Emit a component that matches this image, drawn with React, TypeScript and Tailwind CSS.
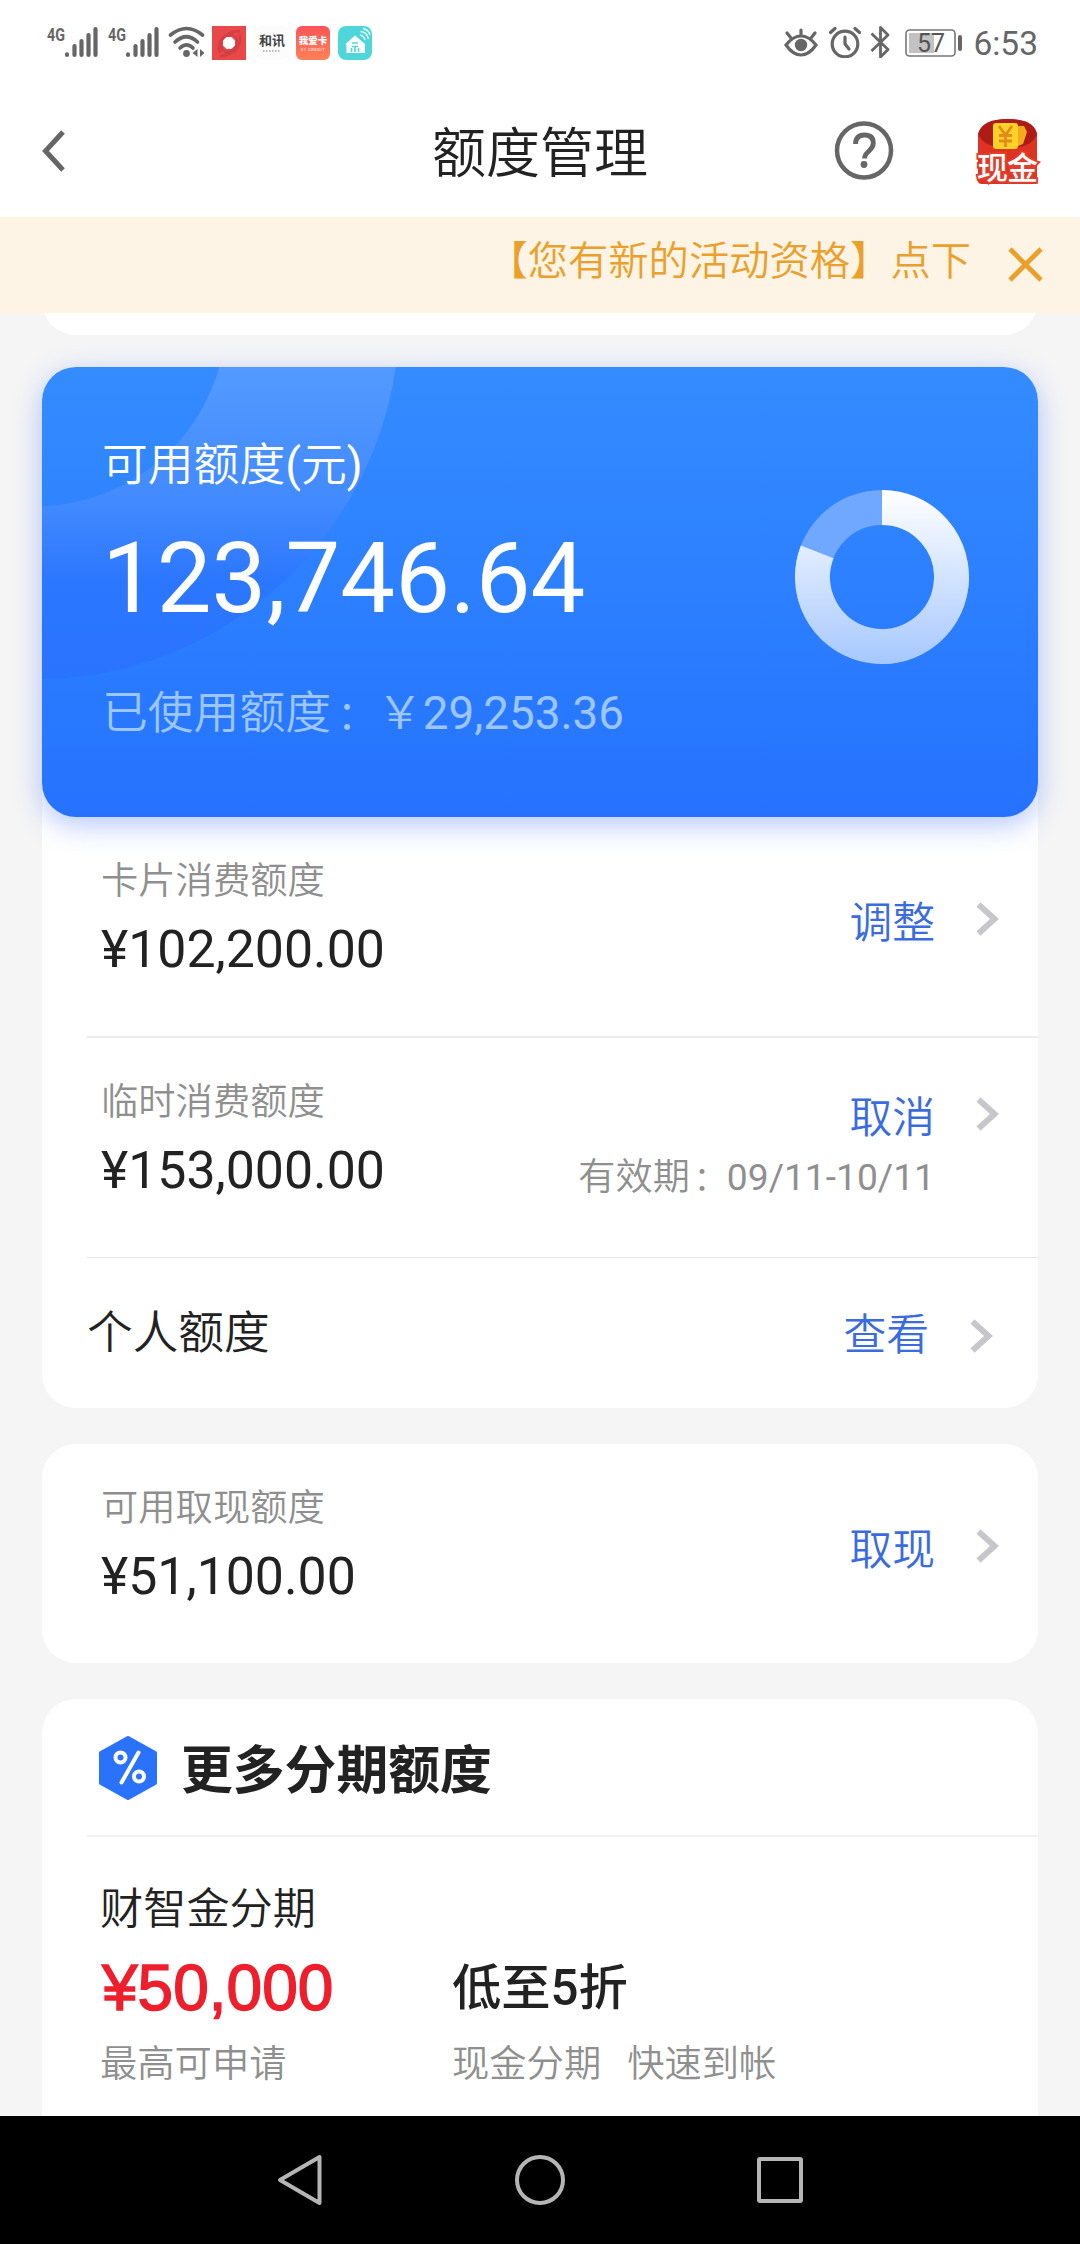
import React from 'react';

const used = 29253.36;
const total = 153000;

function Signal() {
  return (
    <svg className="w-[61px] h-10 shrink-0" viewBox="0 0 61 40">
      <text x="0" y="23" fontSize="19" fontWeight="700" textLength="18" lengthAdjust="spacingAndGlyphs" fill="#666">4G</text>
      <g stroke="#666" strokeWidth="4.2" strokeLinecap="round">
        <path d="M20 37v-.6M27.500 37v-9M34.500 37v-14M41.500 37v-20M48.500 37v-26" />
      </g>
    </svg>
  );
}

function Wifi() {
  return (
    <svg className="w-[38px] h-10 shrink-0" viewBox="0 0 38 40">
      <g fill="none" stroke="#666" strokeWidth="3.6" strokeLinecap="round">
        <path d="M2.500 17Q18.500 4 34.500 17" />
        <path d="M7 24Q18.500 13.500 29.500 24" />
        <path d="M12 30Q18.500 23.500 25 30" />
      </g>
      <circle cx="18.500" cy="35.500" r="3.400" fill="#666" />
      <path d="M29.500 31v8l-5-4zM32 31v8l4.500-4z" fill="#666" />
    </svg>
  );
}

function StatusBar() {
  return (
    <div className="flex h-[88px] items-start pt-[18px] pl-[47px] pr-[42px]">
      <Signal />
      <Signal />
      <div className="-ml-[1px]"><Wifi /></div>
      <svg className="mt-2 ml-[6px] size-[34px] shrink-0" viewBox="0 0 34 34">
        <rect width="34" height="34" fill="#e9484b" />
        <g fill="none" stroke="#cf3b42" strokeWidth="2.500" opacity=".7">
          <path d="M8 27C4 16 11 6 28 5M27 8c4 10-3 21-19 22M11 25C5 15 14 8 22 9M23 10c6 8-2 17-11 16" />
        </g>
        <path d="M14.500 11h5l3.500 3.500v5L19.500 23h-5L11 19.500v-5z" fill="#fff" />
      </svg>
      <div className="mt-2 ml-[9px] flex h-[34px] w-[34px] shrink-0 flex-col items-center rounded-md bg-[#fcfcfc] pt-[8px]">
        <span className="text-[13px] leading-[14px] font-bold whitespace-nowrap text-[#444]">和讯</span>
        <svg className="mt-[2px] h-[2px] w-[18px]" viewBox="0 0 18 2">
          <path d="M0 1h18" stroke="#777" strokeWidth="1.200" strokeDasharray="1.500 1.500" />
        </svg>
      </div>
      <div className="mt-2 ml-[7px] flex h-[34px] w-[34px] shrink-0 flex-col items-center rounded-[6px] bg-linear-to-b from-[#fb5357] to-[#fd8158] pt-[9px] text-white">
        <span className="text-[9.500px] leading-[12px] font-black whitespace-nowrap">我爱卡</span>
        <span className="text-[4px] leading-[5px] tracking-[0.6px] whitespace-nowrap">51 CREDIT</span>
      </div>
      <svg className="mt-2 ml-[8px] size-[34px] shrink-0" viewBox="0 0 34 34">
        <rect width="34" height="34" rx="8" fill="#4fd6da" />
        <path d="M17 9.500 27 18v9H8.500v-8L7.500 18z" fill="#fff" />
        <path d="M14 17h6M14 20.500h6M13.500 26v-4M20.500 26v-4M17 21v5" stroke="#4fd6da" strokeWidth="1.600" />
        <path d="M22 9q4 1 5 5M22.500 5.500Q29 6 30.500 13M25 2.500Q31 4 32 9" fill="none" stroke="#e6ffff" strokeWidth="1.400" />
      </svg>

      <div className="ml-auto flex items-start">
        <svg className="h-10 w-[34px]" viewBox="0 0 34 40">
          <g fill="none" stroke="#666" strokeWidth="3.200" strokeLinecap="round">
            <path d="M2 27Q9 18 17 18T32 27Q25 37 17 37T2 27z" />
            <path d="M17 17v-5M7 20l-4-5M27 20l4-5" />
          </g>
          <circle cx="17" cy="27" r="6.200" fill="#666" />
        </svg>
        <svg className="ml-[11px] h-10 w-8" viewBox="0 0 32 40">
          <g fill="none" stroke="#666" strokeWidth="3.200" strokeLinecap="round">
            <circle cx="16" cy="26" r="12.800" />
            <path d="M16 19v7l4 5M1.500 14.500 6 10.500M30.500 14.500 26 10.500" />
          </g>
        </svg>
        <svg className="ml-[9px] h-10 w-5" viewBox="0 0 20 40">
          <path d="m1.500 15.500 16.500 16-7.500 7.500V9.500L18 17 1.500 33" fill="none" stroke="#666" strokeWidth="2.800" strokeLinejoin="round" />
        </svg>
        <svg className="ml-[15px] h-10 w-[58px]" viewBox="0 0 58 40">
          <rect x="1" y="12" width="49" height="26" rx="3.500" fill="none" stroke="#777" strokeWidth="1.600" />
          <rect x="4" y="15" width="25" height="20" fill="#c2c2c2" />
          <path d="M55 19v12" stroke="#666" strokeWidth="4" strokeLinecap="round" />
          <text x="12" y="33.500" fontSize="26" textLength="28" lengthAdjust="spacingAndGlyphs" fill="#555">57</text>
        </svg>
        <span className="ml-[10px] pt-[6px] text-[33.500px] leading-[40px] text-[#666]">6:53</span>
      </div>
    </div>
  );
}

function TitleBar() {
  return (
    <header className="flex h-[129px] items-start pl-10 pr-[38px] pt-[33px]">
      <div className="w-[392px] pt-[6px]">
        <svg className="w-7 h-12" viewBox="0 0 28 48">
          <path d="M23 5 5.500 24 23 43" fill="none" stroke="#666" strokeWidth="5" />
        </svg>
      </div>
      <h1 className="h-[60px] pt-[4px] text-[54px] leading-[60px] whitespace-nowrap text-[#222] font-[350]">额度管理</h1>
      <svg className="ml-auto size-[60px]" viewBox="0 0 60 60">
        <circle cx="30" cy="29.500" r="27" fill="none" stroke="#666" strokeWidth="4.500" />
        <path d="M21.500 23q0-9 8.800-9 9 0 9 8 0 4-4.300 8-4.500 4-4.500 7.500" fill="none" stroke="#666" strokeWidth="4.800" />
        <circle cx="30" cy="43.500" r="3.400" fill="#666" />
      </svg>
      <svg className="-mt-[4px] ml-[80px] h-[70px] w-[68px]" viewBox="0 0 68 70">
        <path d="M4 17Q8 2 34 2T63 17v48q0 2-3 2H8q-4 0-4-3z" fill="#dd3323" />
        <path d="M4 17Q8 2 34 2T63 17Q58 31 34 31T4 17z" fill="#ae1c17" />
        <path d="M37 9h13l3 6-4 12-13 5z" fill="#f5a91f" />
        <rect x="19" y="6" width="25" height="26" rx="3" fill="#ffd129" />
        <path d="m25 9 6.500 9L38 9M25 18.500h13M25 24h13M31.500 18v12" fill="none" stroke="#e48a1c" strokeWidth="2.800" />
        <text x="3" y="62" fontSize="31" fontWeight="500" textLength="61" fill="#fff" stroke="#e23c2b" strokeWidth="4" paintOrder="stroke">现金</text>
      </svg>
    </header>
  );
}

function Banner() {
  return (
    <div className="flex h-24 items-center justify-end bg-[#fef4e5] pr-[35px] text-[#eaa02b]">
      <span className="-mt-[7px] text-[40.300px] leading-[60px] font-[350] whitespace-nowrap">【您有新的活动资格】点下</span>
      <svg className="ml-[36px] size-[38px]" viewBox="0 0 38 38">
        <path d="m3 3 31 31M34 3 3 34" stroke="#eaa02b" strokeWidth="4.800" />
      </svg>
    </div>
  );
}

function Donut() {
  const c = 2 * Math.PI * 69.5;
  return (
    <svg className="size-[174px]" viewBox="0 0 174 174">
      <defs>
        <linearGradient id="left" gradientUnits="userSpaceOnUse" x1="0" y1="0" x2="0" y2="174">
          <stop offset="0" stopColor="#fff" />
          <stop offset="1" stopColor="#a6c8ff" />
        </linearGradient>
      </defs>
      <circle cx="87" cy="87" r="69.5" fill="none" stroke="#70a8ff" strokeWidth="35" />
      <path d="M87 17.500A69.500 69.500 0 1 1 22.200 61.900" fill="none" stroke="url(#left)" strokeWidth="35" strokeDasharray={`${c * (1 - used / total)} ${c}`} />
    </svg>
  );
}

function BalanceCard() {
  return (
    <div className="relative flex h-[450px] justify-between overflow-hidden rounded-[34px] bg-linear-to-b from-[#348cff] to-[#2672ff] pt-[69px] pl-[60px] pr-[69px] text-white">
      <svg className="absolute top-0 left-0 h-[450px] w-[400px]" viewBox="0 0 400 450">
        <defs>
          <linearGradient id="band" gradientUnits="userSpaceOnUse" x1="0" y1="0" x2="0" y2="312">
            <stop offset="0" stopColor="#539aff" />
            <stop offset=".45" stopColor="#4189ff" />
            <stop offset=".68" stopColor="#2c77ff" />
            <stop offset="1" stopColor="#2973ff" />
          </linearGradient>
        </defs>
        <circle cx="-7" cy="-52" r="278" fill="none" stroke="url(#band)" strokeWidth="173" />
      </svg>
      <div className="relative">
        <p className="text-[45.800px] leading-[60px] font-[350]">
          可用额度<span className="font-normal">(</span>元<span className="font-normal">)</span>
        </p>
        <p className="mt-[33px] text-[97.500px] leading-[100px]">123,746.64</p>
        <p className="mt-[55px] text-[45.800px] leading-[60px] whitespace-nowrap text-[#9cc6ff] font-[350]">
          已使用额度<span className="pl-[6px] text-[40px]">：</span>￥<span className="font-normal">29,253.36</span>
        </p>
      </div>
      <div className="relative mt-[54px]">
        <Donut />
      </div>
    </div>
  );
}

function Chevron() {
  return (
    <svg className="h-9 w-6 shrink-0" viewBox="0 0 24 36">
      <path d="M3.500 3.500 19.500 18 3.500 32.500" fill="none" stroke="#c7c7cb" strokeWidth="6" />
    </svg>
  );
}

type RowProps = {
  label: string;
  amount: string;
  action: string;
  note?: React.ReactNode;
};

function LimitRow({ label, amount, action, note }: RowProps) {
  return (
    <div className="flex h-[219px] justify-between pl-[59px] pr-[39px] pt-[39px]">
      <div>
        <p className="text-[37.300px] leading-[50px] font-[350] text-[#8f8f8f]">{label}</p>
        <p className="mt-[14px] text-[51.800px] leading-[60px] text-[#222]">{amount}</p>
      </div>
      <div className={note ? 'flex pt-[19px]' : 'flex pt-[45px]'}>
        <div className="text-right">
          <p className="h-[50px] text-[42.800px] leading-[44px] font-[350] text-[#3a6ce0]">{action}</p>
          {note && <p className="mt-[6px] text-[37.200px] leading-[50px] whitespace-nowrap font-[350] text-[#8f8f8f]">{note}</p>}
        </div>
        <div className="ml-[40px]"><Chevron /></div>
      </div>
    </div>
  );
}

function NavBar() {
  return (
    <nav className="flex h-32 shrink-0 items-center justify-center gap-[180px] bg-black">
      <svg className="size-[60px]" viewBox="0 0 60 60">
        <path d="M49.500 7v46L10 30z" fill="none" stroke="#b5b5b5" strokeWidth="4" strokeLinejoin="round" />
      </svg>
      <svg className="size-[60px]" viewBox="0 0 60 60">
        <circle cx="30" cy="30" r="23" fill="none" stroke="#b5b5b5" strokeWidth="4" />
      </svg>
      <svg className="size-[60px]" viewBox="0 0 60 60">
        <rect x="9" y="9" width="42" height="42" rx="1" fill="none" stroke="#b5b5b5" strokeWidth="4" />
      </svg>
    </nav>
  );
}

export default function App() {
  return (
    <div className="flex h-[2244px] w-[1080px] flex-col overflow-hidden bg-[#f5f5f5] font-['Roboto','Noto_Sans_CJK_SC',sans-serif]">
      <div className="bg-white">
        <StatusBar />
        <TitleBar />
      </div>
      <Banner />

      <main className="min-h-0 flex-1 overflow-hidden px-[42px]">
        {/* tail of the card scrolled under the banner */}
        <div className="h-[22px] overflow-hidden">
          <div className="-mt-[58px] h-20 rounded-[34px] bg-white" />
        </div>

        <section className="mt-8 rounded-[34px] bg-white">
          <div className="rounded-[34px] shadow-[0_8px_28px_rgba(50,100,255,0.36)]">
            <BalanceCard />
          </div>
          <LimitRow label="卡片消费额度" amount="¥102,200.00" action="调整" />
          <div className="ml-[45px] h-[2px] bg-[#ebebeb]" />
          <LimitRow
            label="临时消费额度"
            amount="¥153,000.00"
            action="取消"
            note={<>有效期<span className="pl-[4px] text-[33px]">：</span><span className="font-normal">09/11-10/11</span></>}
          />
          <div className="ml-[45px] h-px bg-[#e4e4e4]" />
          <div className="flex h-[150px] items-center pl-[45px] pr-[45px]">
            <span className="mt-[2px] text-[45.700px] leading-[60px] font-[350] text-[#222]">个人额度</span>
            <span className="ml-auto mt-[3px] text-[42.800px] leading-[50px] font-[350] text-[#3a6ce0]">查看</span>
            <div className="mt-[6px] ml-[40px]"><Chevron /></div>
          </div>
        </section>

        <section className="mt-9 rounded-[34px] bg-white">
          <LimitRow label="可用取现额度" amount="¥51,100.00" action="取现" />
        </section>

        <section className="mt-9 h-[480px] rounded-[34px] bg-white">
          <div className="flex h-[136px] items-center pl-[56px]">
            <svg className="mt-px h-[66px] w-[60px]" viewBox="0 0 60 66">
              <path d="M30 3 57 18v30L30 63 3 48V18z" fill="#2b72fb" stroke="#2b72fb" strokeWidth="4" strokeLinejoin="round" />
              <g fill="none" stroke="#fff" strokeWidth="4" strokeLinecap="round">
                <circle cx="22.500" cy="22.500" r="5" />
                <circle cx="41" cy="41.500" r="5" />
                <path d="M40.500 17.500 23.500 47.500" />
              </g>
            </svg>
            <h2 className="mt-[9px] ml-[23px] text-[51.800px] leading-[60px] font-bold text-[#222]">更多分期额度</h2>
          </div>
          <div className="ml-[45px] h-[2px] bg-[#f1f1f1]" />
          <div className="grid grid-cols-[352px_1fr] pl-[58px] pt-[41px]">
            <p className="col-span-2 text-[43.200px] leading-[64px] text-[#222] font-[350]">财智金分期</p>
            <p className="mt-[6px] pl-[2px] font-['Liberation_Sans',sans-serif] text-[64px] leading-[80px] text-[#ee1f2d] [-webkit-text-stroke:1.500px_#ee1f2d]">¥50,000</p>
            <p className="mt-[6px] text-[49.300px] leading-[80px] font-medium text-[#222]">低至5折</p>
            <p className="mt-[11px] text-[37.300px] leading-[50px] font-[350] text-[#8f8f8f]">最高可申请</p>
            <p className="mt-[11px] flex gap-[26px] text-[37.300px] leading-[50px] font-[350] text-[#8f8f8f]">
              <span>现金分期</span>
              <span>快速到帐</span>
            </p>
          </div>
        </section>
      </main>

      <NavBar />
    </div>
  );
}
